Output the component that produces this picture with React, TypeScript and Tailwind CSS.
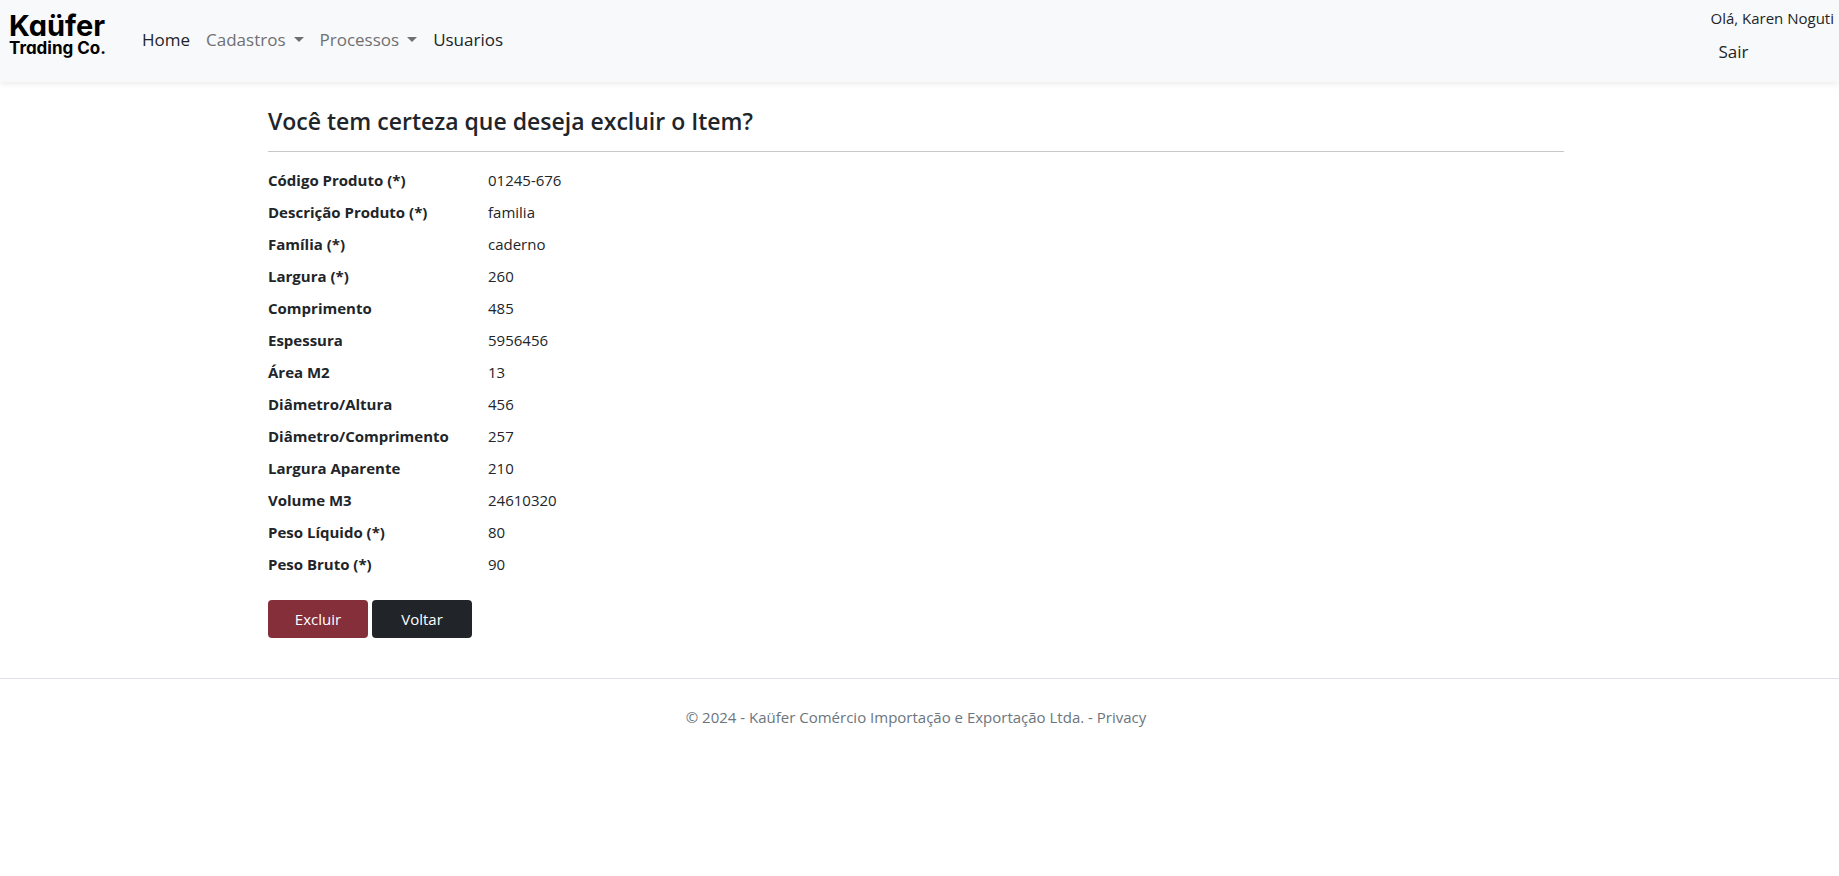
import React from "react";

const fields: [string, string][] = [
  ["Código Produto (*)", "01245-676"],
  ["Descrição Produto (*)", "familia"],
  ["Família (*)", "caderno"],
  ["Largura (*)", "260"],
  ["Comprimento", "485"],
  ["Espessura", "5956456"],
  ["Área M2", "13"],
  ["Diâmetro/Altura", "456"],
  ["Diâmetro/Comprimento", "257"],
  ["Largura Aparente", "210"],
  ["Volume M3", "24610320"],
  ["Peso Líquido (*)", "80"],
  ["Peso Bruto (*)", "90"],
];

function Logo() {
  return (
    <a
      href="#"
      className="flex w-[126px] flex-col pl-[9px] pt-3 font-['Inter',sans-serif] font-bold text-black [font-feature-settings:'cv11']"
    >
      <span className="text-[29px] leading-7">Kaüfer</span>
      <span className="text-[17px] leading-4">Trading Co.</span>
    </a>
  );
}

function MenuButton({ label }: { label: string }) {
  return (
    <button type="button" className="flex items-center gap-2 px-2 text-[#6f7072]" aria-haspopup="menu">
      {label}
      <svg width="10" height="6" viewBox="0 0 10 6" fill="currentColor" aria-hidden="true">
        <path d="M0 0h10L5 5z" />
      </svg>
    </button>
  );
}

export default function App() {
  return (
    <div className="min-h-screen bg-white font-['Open_Sans',sans-serif] text-[15px] leading-6 text-[#212529]">
      <header className="flex h-[82px] items-start justify-between bg-[#f8f9fa] shadow-[0_2px_6px_rgba(0,0,0,0.08)]">
        <div className="flex items-start">
          <Logo />
          <nav className="flex items-center pl-2 pt-[26px] text-[17px] leading-7">
            <a href="#" className="px-2">Home</a>
            <MenuButton label="Cadastros" />
            <MenuButton label="Processos" />
            <a href="#" className="px-2">Usuarios</a>
          </nav>
        </div>
        <div className="flex flex-col items-start pr-[5px] pt-[6px]">
          <span>Olá, Karen Noguti</span>
          <button type="button" className="px-2 pt-2 text-[17px] leading-7">Sair</button>
        </div>
      </header>

      <div className="pr-[7px]">
        <main className="mx-auto max-w-[1320px] px-3 pt-6">
          <h1 className="text-[23px] font-semibold leading-[30px]">Você tem certeza que deseja excluir o Item?</h1>
          <hr className="mt-[15px] border-[#c7c8c9]" />
          <dl className="grid grid-cols-[220px_1fr] gap-y-2 pt-4">
            {fields.map(([label, value]) => (
              <React.Fragment key={label}>
                <dt className="font-bold">{label}</dt>
                <dd>{value}</dd>
              </React.Fragment>
            ))}
          </dl>
          <div className="flex gap-1 pt-6">
            <button type="button" className="h-[38px] w-[100px] rounded bg-[#842f39] text-white">Excluir</button>
            <button type="button" className="h-[38px] w-[100px] rounded bg-[#212529] text-white">Voltar</button>
          </div>
        </main>
      </div>

      <footer className="mt-10 border-t border-[#dee2e6] pr-[7px] pt-[26px] text-center text-[#6c757d]">
        © 2024 - Kaüfer Comércio Importação e Exportação Ltda. - <a href="#">Privacy</a>
      </footer>
    </div>
  );
}
